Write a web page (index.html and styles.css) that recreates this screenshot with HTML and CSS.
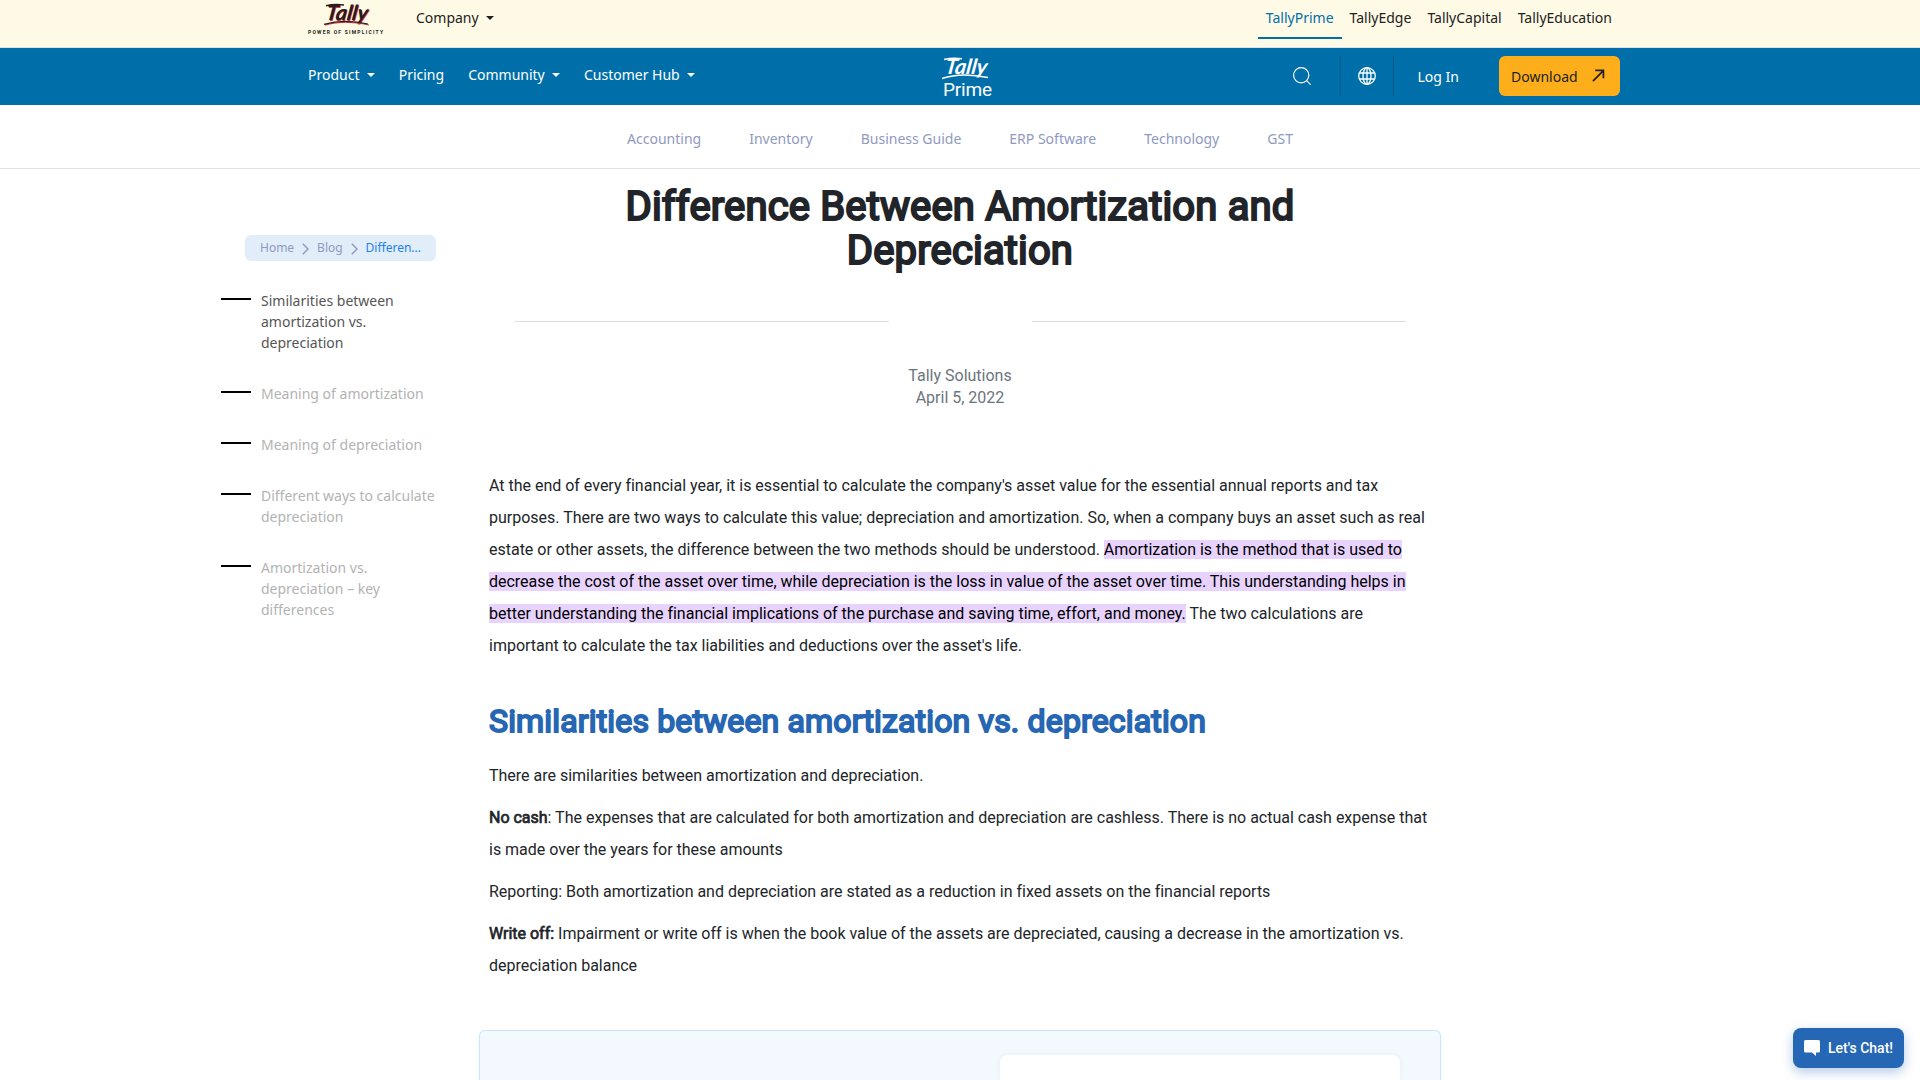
FILE: index.html
```html
<!DOCTYPE html>
<html lang="en">
<head>
<meta charset="utf-8">
<title>Difference Between Amortization and Depreciation</title>
<link rel="stylesheet" href="styles.css">
</head>
<body>
<header>
  <div class="topbar">
    <div class="container">
      <a class="brand">
        <svg width="76" height="32" viewBox="0 0 76 32">
          <g transform="skewX(-8)">
            <text class="script" x="20.800" y="20.500" textLength="42" lengthAdjust="spacingAndGlyphs" fill="#e0323c">Tally</text>
            <text class="script" x="20" y="20" textLength="42" lengthAdjust="spacingAndGlyphs" fill="#231f20">Tally</text>
          </g>
          <path d="M18 5.800Q26 3.800 36 5" stroke="#231f20" stroke-width="1.600" fill="none"/>
          <path d="M17 25.200C30 21.500 44 21.500 61 25" stroke="#e0323c" stroke-width="1" fill="none"/>
          <path d="M16 24.300C30 20.500 44 20.500 60 24" stroke="#231f20" stroke-width="1.200" fill="none"/>
          <text class="tagline" x="0" y="33.500" textLength="75">POWER OF SIMPLICITY</text>
        </svg>
      </a>
      <a class="company">Company<i class="caret"></i></a>
      <nav class="products">
        <a class="active">TallyPrime</a><a>TallyEdge</a><a>TallyCapital</a><a>TallyEducation</a>
      </nav>
    </div>
  </div>
  <div class="mainbar">
    <div class="container">
      <nav class="menu">
        <a>Product<i class="caret"></i></a><a>Pricing</a><a>Community<i class="caret"></i></a><a>Customer Hub<i class="caret"></i></a>
      </nav>
      <a class="prime">
        <svg width="52" height="42" viewBox="0 0 52 42" fill="#fff">
          <g transform="skewX(-8)"><text class="script" x="6" y="17.500" textLength="42" lengthAdjust="spacingAndGlyphs">Tally</text></g>
          <path d="M3 3.500Q11 1.500 21 2.700" stroke="#fff" stroke-width="1.600" fill="none"/>
          <path d="M1 22.500C14 18 30 18 47 21.500" stroke="#fff" stroke-width="1.400" fill="none"/>
          <text class="prime-word" x="2" y="40" textLength="49">Prime</text>
        </svg>
      </a>
      <div class="tools">
        <a class="search"><svg width="18" height="18" viewBox="0 0 18 18" fill="none" stroke="#fff" stroke-width="1.200"><circle cx="8.200" cy="8.200" r="7.600"/><path d="M13.600 13.600L17.600 17.600"/></svg></a>
        <a class="globe"><svg width="18" height="18" viewBox="0 0 18 18" fill="none" stroke="#fff" stroke-width="1.300"><circle cx="9" cy="9" r="8.300"/><ellipse cx="9" cy="9" rx="4" ry="8.300"/><path d="M9 .7V17.300M1.500 6H16.500M1.500 12H16.500"/></svg></a>
        <a class="login">Log In</a>
        <a class="download">Download<svg width="13" height="13" viewBox="0 0 14 14" fill="none" stroke="#222" stroke-width="1.900"><path d="M1 13L12 2M3.500 1.500H12.300V10"/></svg></a>
      </div>
    </div>
  </div>
  <nav class="topics">
    <a>Accounting</a><a>Inventory</a><a>Business Guide</a><a>ERP Software</a><a>Technology</a><a>GST</a>
  </nav>
</header>
<main>
  <aside>
    <nav class="crumbs">
      <a>Home</a><svg width="7" height="12" viewBox="0 0 7 12"><path d="M.8.8L6 6L.8 11.200"/></svg><a>Blog</a><svg width="7" height="12" viewBox="0 0 7 12"><path d="M.8.8L6 6L.8 11.200"/></svg><span>Differen...</span>
    </nav>
    <ul class="toc">
      <li class="current">Similarities between amortization vs. depreciation</li>
      <li>Meaning of amortization</li>
      <li>Meaning of depreciation</li>
      <li>Different ways to calculate depreciation</li>
      <li>Amortization vs. depreciation – key differences</li>
    </ul>
  </aside>
  <article>
    <h1>Difference Between Amortization and Depreciation</h1>
    <div class="rules"><span></span><span></span></div>
    <div class="meta">Tally Solutions<br>April 5, 2022</div>
    <div class="copy">
      <p>At the end of every financial year, it is essential to calculate the company's asset value for the essential annual reports and tax purposes. There are two ways to calculate this value; depreciation and amortization. So, when a company buys an asset such as real estate or other assets, the difference between the two methods should be understood. <mark>Amortization is the method that is used to decrease the cost of the asset over time, while depreciation is the loss in value of the asset over time. This understanding helps in better understanding the financial implications of the purchase and saving time, effort, and money.</mark> The two calculations are important to calculate the tax liabilities and deductions over the asset's life.</p>
      <h2>Similarities between amortization vs. depreciation</h2>
      <p>There are similarities between amortization and depreciation.</p>
      <p><b>No cash</b>: The expenses that are calculated for both amortization and depreciation are cashless. There is no actual cash expense that is made over the years for these amounts</p>
      <p>Reporting: Both amortization and depreciation are stated as a reduction in fixed assets on the financial reports</p>
      <p><b>Write off:</b> Impairment or write off is when the book value of the assets are depreciated, causing a decrease in the amortization vs. depreciation balance</p>
    </div>
    <div class="promo"><div class="promo-card"></div></div>
  </article>
</main>
<a class="chat"><svg width="16" height="16" viewBox="0 0 16 16" fill="#fff"><path d="M1.500 0H14.500Q16 0 16 1.500V11Q16 12.500 14.500 12.500H12V16L8 12.500H1.500Q0 12.500 0 11V1.500Q0 0 1.500 0Z"/></svg>Let's Chat!</a>
</body>
</html>
```
FILE: styles.css
```css
* { box-sizing: border-box; }
body {
  margin: 0;
  height: 1080px;
  overflow: hidden;
  display: flex;
  flex-direction: column;
  font: 16px/1.5 Roboto, sans-serif;
  color: #212529;
  background: #fff;
}
header { flex: none; font: 14px/21px "Noto Sans", sans-serif; }
.container {
  width: 1312px;
  height: 100%;
  margin-left: 308px;
  display: flex;
  align-items: flex-start;
}
.topbar { height: 48px; background: #fffae6; border-bottom: 1px solid #dee2e6; color: #222; }
.brand svg { display: block; overflow: visible; }
.brand { width: 108px; }
.script { font: italic 700 21px Lato, sans-serif; }
.tagline { font: 700 5px Roboto, sans-serif; fill: #231f20; }
.prime-word { font: 400 19px Roboto, sans-serif; }
.company { padding-top: 7px; display: flex; align-items: center; }
.caret {
  width: 0;
  margin-left: 7.200px;
  border: 4px solid transparent;
  border-top-color: currentColor;
  border-bottom: 0;
}
.products { margin-left: auto; display: flex; }
.products a { padding: 7px 8px 9px; border-bottom: 2px solid transparent; }
.products .active { color: #006fa9; border-color: #006fa9; }

.mainbar { height: 57px; background: #006fa9; color: #fff; }
.mainbar .container { display: grid; grid-template-columns: 1fr 52px 1fr; }
.menu { display: flex; gap: 24px; padding-top: 16px; }
.menu a { display: flex; align-items: center; }
.prime { padding: 8px 0 0 3px; }
.prime svg { display: block; overflow: visible; }
.tools { justify-self: end; display: flex; padding-top: 8px; height: 48px; align-items: stretch; }
.tools a { display: flex; align-items: center; }
.search { padding-right: 29px; }
.globe { padding: 0 17px; border: solid #075987; border-width: 0 1px; }
.login { padding: 0 40px 0 24px; }
.download {
  width: 121px;
  padding: 0 15px 0 12px;
  justify-content: space-between;
  border-radius: 6px;
  background: #ffae1b;
  color: #222;
}
.download svg { margin-top: -2px; }
.topics {
  height: 64px;
  padding-bottom: 19px;
  border-bottom: 1px solid #dee2e6;
  display: flex;
  justify-content: center;
  align-items: flex-end;
  gap: 48px;
  color: #8f9abf;
}
main { flex: 1; min-height: 0; display: flex; padding-left: 221px; }
aside { width: 258px; font: 14px/21px "Noto Sans", sans-serif; padding-top: 66px; }
.crumbs {
  width: 191px;
  height: 26px;
  margin-left: 24px;
  padding: 0 15px 2px;
  display: flex;
  align-items: center;
  justify-content: space-between;
  border-radius: 6px;
  background: #e1edf9;
  color: #8f9abf;
  font-size: 12px;
}
.crumbs svg { fill: none; stroke: #8f9abf; stroke-width: 1.400; margin-top: 4px; }
.crumbs span { color: #1f7fee; }
.toc { list-style: none; margin: 0; padding: 29px 0 0; width: 216px; }
.toc li { display: flex; gap: 10px; margin-bottom: 30px; color: #b3b3b3; }
.toc li::before { content: ""; flex: none; width: 30px; height: 2px; margin-top: 8px; background: #000; }
.toc .current { color: #555; }

article { width: 962px; display: flex; flex-direction: column; }
h1 {
  width: 720px;
  margin: 16px auto 0;
  font-size: 40px;
  line-height: 44px;
  font-weight: 400;
  letter-spacing: .15px;
  -webkit-text-stroke: 2.100px;
  text-align: center;
}
.rules { display: flex; justify-content: space-between; padding: 48px 35px 0 36px; }
.rules span { width: 374px; height: 1px; background: #dcdcde; }
.meta { margin-top: 43px; line-height: 22px; text-align: center; color: #6c757d; }
.copy { padding: 61px 10px 0; line-height: 32px; letter-spacing: -.008px; }
p { margin: 0 0 10px; }
h2 {
  margin: 40px 0 20px;
  font-size: 32px;
  line-height: 38px;
  font-weight: 400;
  letter-spacing: .16px;
  color: #2666b3;
  -webkit-text-stroke: 1.900px;
}
b { font-weight: 400; -webkit-text-stroke: .7px; }
mark { background: #e8d3ff; color: #000; }
.promo {
  flex: 1;
  margin-top: 38px;
  padding: 24px 40px 0;
  border: 1px solid #c3e6ff;
  border-bottom: 0;
  border-radius: 6px 6px 0 0;
  background: #f4f9ff;
  display: flex;
  justify-content: flex-end;
}
.promo-card { width: 400px; background: #fff; border-radius: 8px 8px 0 0; box-shadow: 0 0 6px rgba(40, 100, 180, .08); }
.chat {
  position: absolute;
  left: 1793px;
  top: 1028px;
  width: 111px;
  height: 40px;
  padding-left: 11px;
  display: flex;
  align-items: center;
  gap: 8px;
  border-radius: 8px;
  background: #2567b5;
  color: #fff;
  font-size: 14px;
  font-weight: 500;
  white-space: nowrap;
  box-shadow: 0 4px 12px rgba(37, 103, 181, .35);
}
```
